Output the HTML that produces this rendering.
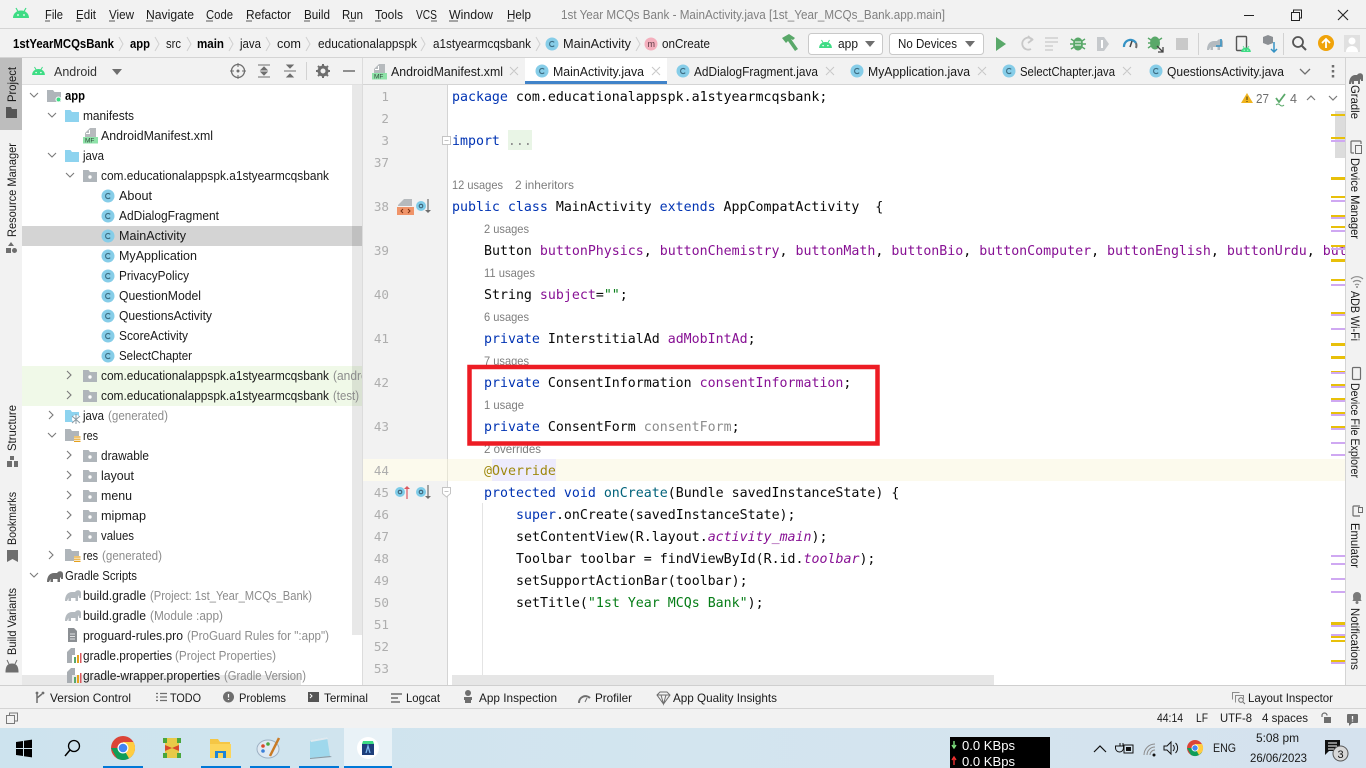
<!DOCTYPE html>
<html><head><meta charset="utf-8"><title>MainActivity.java</title>
<style>
html,body{margin:0;padding:0;width:1366px;height:768px;overflow:hidden;background:#f2f2f2}
svg{display:block}
text{white-space:pre}
.u{font:13px "Liberation Sans",sans-serif;fill:#1a1a1a}
.b{font-weight:bold;fill:#000}
.g{fill:#8c8c8c}
.c{font:13.28px "DejaVu Sans Mono","Liberation Mono",monospace;fill:#080808}
.k{fill:#0033b3}.f{fill:#871094}.s{fill:#067d17}.a{fill:#9e880d}.i{font-style:italic}.x{fill:#8c8c8c}
.n{font:12.6px "DejaVu Sans Mono","Liberation Mono",monospace;fill:#aeaeae}
.h{font:12px "Liberation Sans",sans-serif;fill:#7d7d7d}
.sm{font:12px "Liberation Sans",sans-serif;fill:#1a1a1a}
</style></head><body>
<svg width="1366" height="768" viewBox="0 0 1366 768" xmlns="http://www.w3.org/2000/svg">
<defs>
<symbol id="C" viewBox="0 0 14 14" overflow="visible"><circle cx="7" cy="7" r="6.5" fill="#86cde8"/><path d="M9.200 5.400A2.600 2.600 0 1 0 9.200 8.600" fill="none" stroke="#3e6e84" stroke-width="1.100"/></symbol>
<symbol id="fg" viewBox="0 0 14 12" overflow="visible"><path d="M0 0h5.500l1.500 2h7v10H0z" fill="#afb5ba"/><circle cx="7" cy="7" r="1.700" fill="#fff"/></symbol>
<symbol id="fb" viewBox="0 0 14 12" overflow="visible"><path d="M0 0h5.500l1.500 2h7v10H0z" fill="#8dd3ef"/></symbol>
<symbol id="fr" viewBox="0 0 16 14" overflow="visible"><path d="M0 0h5.500l1.500 2h7v10H0z" fill="#afb5ba"/><path d="M9 7h7v7H9z" fill="#fff"/><path d="M9 8h6.500M9 10.200h6.500M9 12.400h6.500" stroke="#e5a11e" stroke-width="1.200"/></symbol>
<symbol id="ele" viewBox="0 0 16 12" overflow="visible"><path d="M0 12C0 6 3 3 7 3h3c2-3 6-2 6 1v5h-2V6l-1 2v4h-2.500V9H6v3H3.500V9L2 12z" fill="#b4babf"/></symbol>
<symbol id="prop" viewBox="0 0 14 15" overflow="visible"><path d="M0 4l4-4h4v7H5v8H0z" fill="#a8adb2"/><path d="M7 9h2v6H7z" fill="#59a869"/><path d="M10 7h2v8h-2z" fill="#e5a11e"/><path d="M13 5h1.500v10H13z" fill="#db5860"/></symbol>
<symbol id="mf" viewBox="0 0 16 16" overflow="visible"><path d="M7 0h6v9H2V5z" fill="#b6babd"/><path d="M6.500 2v3.500H3" stroke="#fff" fill="none"/><rect y="9" width="15" height="6.500" fill="#8ee2a8"/><text x="2" y="14.500" font-family="Liberation Sans" font-size="6.500" fill="#2f4a3a">MF</text></symbol>
<symbol id="andr" viewBox="0 0 16 10" overflow="visible"><path d="M0 10C0 5.500 3.500 2.500 8 2.500S16 5.500 16 10z" fill="#3ddc84"/><path d="M3 0l2 3.500M13 0l-2 3.500" stroke="#3ddc84" stroke-width="1.200"/><circle cx="5" cy="7" r=".9" fill="#fff"/><circle cx="11" cy="7" r=".9" fill="#fff"/></symbol>
<clipPath id="tree"><rect x="22" y="85" width="340" height="600"/></clipPath>
<clipPath id="ed"><rect x="448" y="85" width="897" height="590"/></clipPath>
<clipPath id="neti"><rect x="950" y="737" width="100" height="31"/></clipPath>
<linearGradient id="tb" x1="0" x2="1" y1="0" y2="0"><stop offset="0" stop-color="#cde3ee"/><stop offset=".5" stop-color="#d3e5ef"/><stop offset="1" stop-color="#d5e2ee"/></linearGradient>
</defs>

<rect width="1366" height="768" fill="#f2f2f2"/>
<!-- title bar -->
<use href="#andr" x="13" y="8" width="16" height="10"/>
<text class="u" x="45" y="19" textLength="18" lengthAdjust="spacingAndGlyphs">File</text>
<text class="u" x="76" y="19" textLength="20" lengthAdjust="spacingAndGlyphs">Edit</text>
<text class="u" x="109" y="19" textLength="25" lengthAdjust="spacingAndGlyphs">View</text>
<text class="u" x="146" y="19" textLength="48" lengthAdjust="spacingAndGlyphs">Navigate</text>
<text class="u" x="206" y="19" textLength="27" lengthAdjust="spacingAndGlyphs">Code</text>
<text class="u" x="246" y="19" textLength="45" lengthAdjust="spacingAndGlyphs">Refactor</text>
<text class="u" x="304" y="19" textLength="26" lengthAdjust="spacingAndGlyphs">Build</text>
<text class="u" x="342" y="19" textLength="21" lengthAdjust="spacingAndGlyphs">Run</text>
<text class="u" x="375" y="19" textLength="28" lengthAdjust="spacingAndGlyphs">Tools</text>
<text class="u" x="416" y="19" textLength="21" lengthAdjust="spacingAndGlyphs">VCS</text>
<text class="u" x="449" y="19" textLength="44" lengthAdjust="spacingAndGlyphs">Window</text>
<text class="u" x="507" y="19" textLength="24" lengthAdjust="spacingAndGlyphs">Help</text>
<path d="M45 21h5M76 21h5M109 21h6M146 21h7M206 21h7M246 21h6M304 21h6M349 21h6M375 21h6M431 21h6M449 21h9M507 21h7" stroke="#222" stroke-width=".8"/>
<text class="u" style="fill:#808080" x="561" y="19" textLength="384" lengthAdjust="spacingAndGlyphs">1st Year MCQs Bank - MainActivity.java [1st_Year_MCQs_Bank.app.main]</text>
<path d="M1244 15.500h10" stroke="#222"/>
<path d="M1291.500 12.500h8v8h-8zM1293.500 12.500v-2.500h8v8h-2" fill="none" stroke="#222"/>
<path d="M1338 10l10 10M1348 10l-10 10" stroke="#222" stroke-width="1.100"/>
<rect y="28" width="1366" height="1" fill="#d4d4d4"/>

<!-- breadcrumbs -->
<text class="u b" x="13" y="48" textLength="101" lengthAdjust="spacingAndGlyphs">1stYearMCQsBank</text>
<text class="u b" x="130" y="48" textLength="20" lengthAdjust="spacingAndGlyphs">app</text>
<text class="u" x="166" y="48" textLength="15" lengthAdjust="spacingAndGlyphs">src</text>
<text class="u b" x="197" y="48" textLength="27" lengthAdjust="spacingAndGlyphs">main</text>
<text class="u" x="240" y="48" textLength="21" lengthAdjust="spacingAndGlyphs">java</text>
<text class="u" x="277" y="48" textLength="24" lengthAdjust="spacingAndGlyphs">com</text>
<text class="u" x="318" y="48" textLength="99" lengthAdjust="spacingAndGlyphs">educationalappspk</text>
<text class="u" x="433" y="48" textLength="98" lengthAdjust="spacingAndGlyphs">a1styearmcqsbank</text>
<path d="M119 37l4 7-4 7M155 37l4 7-4 7M187 37l4 7-4 7M229 37l4 7-4 7M266 37l4 7-4 7M306 37l4 7-4 7M421 37l4 7-4 7M536 37l4 7-4 7M636 37l4 7-4 7" fill="none" stroke="#d0d0d0"/>
<use href="#C" x="545" y="37" width="14" height="14"/>
<text class="u" x="563" y="48" textLength="68" lengthAdjust="spacingAndGlyphs">MainActivity</text>
<circle cx="651" cy="44" r="6.500" fill="#f4afbd"/><text x="647.500" y="47" font-family="Liberation Sans" font-size="9" fill="#5c3a44">m</text>
<text class="u" x="662" y="48" textLength="48" lengthAdjust="spacingAndGlyphs">onCreate</text>
<!-- toolbar -->
<path d="M782 38l7-4 6 4-2 2-2-1 7 10-3 2-7-10-2 2z" fill="#59a869"/>
<rect x="808.500" y="33.500" width="74" height="21" rx="3" fill="#fff" stroke="#c9c9c9"/>
<use href="#andr" x="819" y="40" width="13" height="8"/>
<text class="u" x="838" y="48" textLength="20" lengthAdjust="spacingAndGlyphs">app</text>
<path d="M865 41h10l-5 6z" fill="#6e6e6e"/>
<rect x="889.500" y="33.500" width="94" height="21" rx="3" fill="#fff" stroke="#c9c9c9"/>
<text class="u" x="898" y="48" textLength="59" lengthAdjust="spacingAndGlyphs">No Devices</text>
<path d="M965 41h10l-5 6z" fill="#6e6e6e"/>
<path d="M996 37v14l10-7z" fill="#59a869"/>
<path d="M1033 40a6 6 0 1 0-2 9M1028 36l4 4-4 3" fill="none" stroke="#c8c8c8" stroke-width="1.800"/>
<path d="M1045 38h13M1045 42h13M1045 46h8M1045 50h8" stroke="#c8c8c8" stroke-width="1.300"/>
<g fill="#59a869"><ellipse cx="1078" cy="44" rx="5" ry="6.500"/><path d="M1071 39l3 2M1085 39l-3 2M1070 44h3M1086 44h-3M1071 49l3-2M1085 49l-3-2" stroke="#59a869" stroke-width="1.400"/><path d="M1075 42h6M1075 45h6" stroke="#fff"/></g>
<path d="M1097 37h7l5 7-5 7h-7z" fill="#c6c9cc"/><path d="M1102 40v8" stroke="#fff" stroke-width="2"/>
<path d="M1124 47a6.500 6.500 0 0 1 12-4" fill="none" stroke="#3592c4" stroke-width="2.200"/><path d="M1136 48a7 7 0 0 0 0-5" fill="none" stroke="#6e6e6e" stroke-width="2"/><path d="M1130 47l2-6" stroke="#444" stroke-width="1.500"/>
<ellipse cx="1155" cy="43" rx="5" ry="6.500" fill="#59a869"/><path d="M1148 38l3 2M1148 43h3M1148 48l3-2M1162 38l-3 2" stroke="#59a869" stroke-width="1.400"/><path d="M1157 46l6 6M1163 47v5h-5" fill="none" stroke="#444" stroke-width="1.300"/>
<rect x="1176" y="38" width="12" height="12" fill="#c9c9c9"/>
<rect x="1198" y="33" width="1" height="22" fill="#d2d2d2"/>
<use href="#ele" x="1207" y="38" width="16" height="12"/><path d="M1221 39v7h-5" stroke="#3592c4" fill="none" stroke-width="1.500"/>
<rect x="1236.500" y="36.500" width="10" height="14" rx="1" fill="none" stroke="#555" stroke-width="1.400"/><use href="#andr" x="1241" y="46" width="10" height="6"/>
<path d="M1263 37l5-2 5 2v6l-5 2-5-2z" fill="#8b8f93"/><path d="M1274 42v10M1271 49l3 3 3-3" fill="none" stroke="#3592c4" stroke-width="1.500"/>
<rect x="1283" y="33" width="1" height="22" fill="#d2d2d2"/>
<circle cx="1298" cy="42" r="5" fill="none" stroke="#555" stroke-width="1.800"/><path d="M1302 46l4 4" stroke="#555" stroke-width="2"/>
<circle cx="1326" cy="43" r="8" fill="#f0a30a"/><path d="M1326 48v-9M1322 43l4-4 4 4" fill="none" stroke="#fff" stroke-width="1.800"/>
<rect x="1344" y="35" width="16" height="17" fill="#e0e0e0"/><circle cx="1352" cy="41" r="3.500" fill="#fff"/><path d="M1346 52c0-8 12-8 12 0z" fill="#fff"/>
<rect y="57" width="1366" height="1" fill="#d4d4d4"/>

<!-- left strip -->
<rect x="0" y="58" width="22" height="72" fill="#bdbdbd"/>
<text class="sm" transform="translate(16 102) rotate(-90)" textLength="35" lengthAdjust="spacingAndGlyphs">Project</text>
<text class="sm" transform="translate(16 237) rotate(-90)" textLength="94" lengthAdjust="spacingAndGlyphs">Resource Manager</text>
<text class="sm" transform="translate(16 451) rotate(-90)" textLength="46" lengthAdjust="spacingAndGlyphs">Structure</text>
<text class="sm" transform="translate(16 545) rotate(-90)" textLength="53" lengthAdjust="spacingAndGlyphs">Bookmarks</text>
<text class="sm" transform="translate(16 655) rotate(-90)" textLength="67" lengthAdjust="spacingAndGlyphs">Build Variants</text>
<path d="M6 107h5l1 2h5v9H6z" fill="#555"/>
<path d="M11 242l3 4H8zM6 248h5v5H6z" fill="#6e6e6e"/><circle cx="14.500" cy="250.500" r="2.500" fill="#6e6e6e"/>
<path d="M7 461h5v6H7zM14 461h4v6h-4zM10 456h4v4h-4z" fill="#6e6e6e"/>
<path d="M7 550h11v12l-5.500-3-5.500 3z" fill="#6e6e6e"/>
<path d="M6 672c0-6 2-8 6-8s6 2 6 8zM7 660l2 4M17 660l-2 4" fill="#6e6e6e" stroke="#6e6e6e"/>

<!-- project panel header -->
<use href="#andr" x="32" y="67" width="13" height="8"/>
<text class="u" style="fill:#333" x="54" y="76" textLength="43" lengthAdjust="spacingAndGlyphs">Android</text>
<path d="M112 69h10l-5 6z" fill="#6e6e6e"/>
<circle cx="238" cy="71" r="6.500" fill="none" stroke="#6e6e6e" stroke-width="1.300"/><circle cx="238" cy="71" r="1.500" fill="#6e6e6e"/><path d="M238 63v4M238 75v4M230 71h4M242 71h4" stroke="#6e6e6e"/>
<path d="M258 65h12M258 77h12M261 70l3-3 3 3zM261 72l3 3 3-3z" stroke="#6e6e6e" fill="#6e6e6e" stroke-width="1"/>
<path d="M284 71h12M287 65l3 3 3-3zM287 77l3-3 3 3z" stroke="#6e6e6e" fill="#6e6e6e"/>
<rect x="306" y="62" width="1" height="18" fill="#d2d2d2"/>
<circle cx="323" cy="71" r="4" fill="none" stroke="#6e6e6e" stroke-width="3"/><path d="M323 64v2M323 76v2M316 71h2M328 71h2M318 66l1.500 1.500M328 66l-1.500 1.500M318 76l1.500-1.500M328 76l-1.500-1.500" stroke="#6e6e6e" stroke-width="2"/>
<path d="M343 71h12" stroke="#6e6e6e" stroke-width="1.500"/>
<rect x="22" y="84" width="341" height="1" fill="#e0e0e0"/>
<rect x="22" y="85" width="340" height="600" fill="#fff"/>
<rect x="362" y="58" width="1" height="628" fill="#dcdcdc"/>

<!-- tree -->
<g clip-path="url(#tree)">
<rect x="22" y="226" width="340" height="20" fill="#d4d4d4"/>
<rect x="22" y="366" width="340" height="40" fill="#f0f9e8"/>
<rect x="352" y="85" width="10" height="550" fill="#000" opacity=".09"/>
<g fill="none" stroke="#7a7a7a" stroke-width="1.100">
<path d="M30 93l4 4 4-4M48 113l4 4 4-4M48 153l4 4 4-4M66 173l4 4 4-4M48 433l4 4 4-4M30 573l4 4 4-4"/>
<path d="M67 371l4 4-4 4M67 391l4 4-4 4M49 411l4 4-4 4M67 451l4 4-4 4M67 471l4 4-4 4M67 491l4 4-4 4M67 511l4 4-4 4M67 531l4 4-4 4M49 551l4 4-4 4"/>
</g>
<path d="M47 90h6l1.500 2H61v10H47z" fill="#afb5ba"/><circle cx="58.500" cy="99.500" r="2.500" fill="#3ddc84" stroke="#fff"/>
<use href="#fb" x="65" y="110" width="14" height="12"/>
<use href="#mf" x="83" y="128" width="16" height="16"/>
<use href="#fb" x="65" y="150" width="14" height="12"/>
<use href="#fg" x="83" y="170" width="14" height="12"/>
<use href="#C" x="101" y="189" width="14" height="14"/>
<use href="#C" x="101" y="209" width="14" height="14"/>
<use href="#C" x="101" y="229" width="14" height="14"/>
<use href="#C" x="101" y="249" width="14" height="14"/>
<use href="#C" x="101" y="269" width="14" height="14"/>
<use href="#C" x="101" y="289" width="14" height="14"/>
<use href="#C" x="101" y="309" width="14" height="14"/>
<use href="#C" x="101" y="329" width="14" height="14"/>
<use href="#C" x="101" y="349" width="14" height="14"/>
<use href="#fg" x="83" y="370" width="14" height="12"/>
<use href="#fg" x="83" y="390" width="14" height="12"/>
<use href="#fb" x="65" y="410" width="14" height="12"/><circle cx="76" cy="419" r="4" fill="#fff"/><path d="M72 416l8 7M80 416l-8 7M76 414v10" stroke="#8a9aa3"/>
<use href="#fr" x="65" y="429" width="16" height="14"/>
<use href="#fg" x="83" y="450" width="14" height="12"/>
<use href="#fg" x="83" y="470" width="14" height="12"/>
<use href="#fg" x="83" y="490" width="14" height="12"/>
<use href="#fg" x="83" y="510" width="14" height="12"/>
<use href="#fg" x="83" y="530" width="14" height="12"/>
<use href="#fr" x="65" y="549" width="16" height="14"/>
<path d="M47 582C47 576 50 573 54 573h3c2-3 6-2 6 1v5h-2v-2l-1 1v4h-2.500v-3H53v3h-2.500v-3L49 582z" fill="#6e6e6e"/>
<rect x="22" y="675" width="279" height="10" fill="#000" opacity=".09"/>
<use href="#ele" x="65" y="589" width="16" height="12"/>
<use href="#ele" x="65" y="609" width="16" height="12"/>
<path d="M68 628h6l3 3v11h-9z" fill="#8b8f93"/><path d="M70 634h5M70 636.500h5M70 639h5" stroke="#fff" stroke-width=".8"/>
<use href="#prop" x="67" y="648" width="14" height="15"/>
<use href="#prop" x="67" y="668" width="14" height="15"/>
<text class="u b" x="65" y="100" textLength="20" lengthAdjust="spacingAndGlyphs">app</text>
<text class="u" x="83" y="120" textLength="51" lengthAdjust="spacingAndGlyphs">manifests</text>
<text class="u" x="101" y="140" textLength="112" lengthAdjust="spacingAndGlyphs">AndroidManifest.xml</text>
<text class="u" x="83" y="160" textLength="21" lengthAdjust="spacingAndGlyphs">java</text>
<text class="u" x="101" y="180" textLength="228" lengthAdjust="spacingAndGlyphs">com.educationalappspk.a1styearmcqsbank</text>
<text class="u" x="119" y="200" textLength="33" lengthAdjust="spacingAndGlyphs">About</text>
<text class="u" x="119" y="220" textLength="100" lengthAdjust="spacingAndGlyphs">AdDialogFragment</text>
<text class="u" x="119" y="240" textLength="67" lengthAdjust="spacingAndGlyphs">MainActivity</text>
<text class="u" x="119" y="260" textLength="78" lengthAdjust="spacingAndGlyphs">MyApplication</text>
<text class="u" x="119" y="280" textLength="70" lengthAdjust="spacingAndGlyphs">PrivacyPolicy</text>
<text class="u" x="119" y="300" textLength="82" lengthAdjust="spacingAndGlyphs">QuestionModel</text>
<text class="u" x="119" y="320" textLength="93" lengthAdjust="spacingAndGlyphs">QuestionsActivity</text>
<text class="u" x="119" y="340" textLength="69" lengthAdjust="spacingAndGlyphs">ScoreActivity</text>
<text class="u" x="119" y="360" textLength="73" lengthAdjust="spacingAndGlyphs">SelectChapter</text>
<text class="u" x="101" y="380" textLength="228" lengthAdjust="spacingAndGlyphs">com.educationalappspk.a1styearmcqsbank</text>
<text class="u g" x="333" y="380" textLength="70" lengthAdjust="spacingAndGlyphs">(androidTest)</text>
<text class="u" x="101" y="400" textLength="228" lengthAdjust="spacingAndGlyphs">com.educationalappspk.a1styearmcqsbank</text>
<text class="u g" x="333" y="400" textLength="26" lengthAdjust="spacingAndGlyphs">(test)</text>
<text class="u" x="83" y="420" textLength="21" lengthAdjust="spacingAndGlyphs">java</text>
<text class="u g" x="108" y="420" textLength="60" lengthAdjust="spacingAndGlyphs">(generated)</text>
<text class="u" x="83" y="440" textLength="15" lengthAdjust="spacingAndGlyphs">res</text>
<text class="u" x="101" y="460" textLength="48" lengthAdjust="spacingAndGlyphs">drawable</text>
<text class="u" x="101" y="480" textLength="33" lengthAdjust="spacingAndGlyphs">layout</text>
<text class="u" x="101" y="500" textLength="31" lengthAdjust="spacingAndGlyphs">menu</text>
<text class="u" x="101" y="520" textLength="45" lengthAdjust="spacingAndGlyphs">mipmap</text>
<text class="u" x="101" y="540" textLength="33" lengthAdjust="spacingAndGlyphs">values</text>
<text class="u" x="83" y="560" textLength="15" lengthAdjust="spacingAndGlyphs">res</text>
<text class="u g" x="102" y="560" textLength="60" lengthAdjust="spacingAndGlyphs">(generated)</text>
<text class="u" x="65" y="580" textLength="72" lengthAdjust="spacingAndGlyphs">Gradle Scripts</text>
<text class="u" x="83" y="600" textLength="63" lengthAdjust="spacingAndGlyphs">build.gradle</text>
<text class="u g" x="150" y="600" textLength="162" lengthAdjust="spacingAndGlyphs">(Project: 1st_Year_MCQs_Bank)</text>
<text class="u" x="83" y="620" textLength="63" lengthAdjust="spacingAndGlyphs">build.gradle</text>
<text class="u g" x="150" y="620" textLength="73" lengthAdjust="spacingAndGlyphs">(Module :app)</text>
<text class="u" x="83" y="640" textLength="100" lengthAdjust="spacingAndGlyphs">proguard-rules.pro</text>
<text class="u g" x="187" y="640" textLength="142" lengthAdjust="spacingAndGlyphs">(ProGuard Rules for ":app")</text>
<text class="u" x="83" y="660" textLength="89" lengthAdjust="spacingAndGlyphs">gradle.properties</text>
<text class="u g" x="175" y="660" textLength="101" lengthAdjust="spacingAndGlyphs">(Project Properties)</text>
<text class="u" x="83" y="680" textLength="137" lengthAdjust="spacingAndGlyphs">gradle-wrapper.properties</text>
<text class="u g" x="224" y="680" textLength="82" lengthAdjust="spacingAndGlyphs">(Gradle Version)</text>
</g>

<!-- tabs -->
<rect x="363" y="58" width="982" height="26" fill="#f2f2f2"/>
<rect x="525" y="58" width="142" height="26" fill="#fff"/>
<rect x="525" y="81" width="142" height="3" fill="#4083c9"/>
<rect x="363" y="84" width="982" height="1" fill="#d4d4d4"/>
<use href="#mf" x="372" y="64" width="16" height="16"/>
<text class="u" x="391" y="76" textLength="112" lengthAdjust="spacingAndGlyphs">AndroidManifest.xml</text>
<use href="#C" x="535" y="64" width="14" height="14"/>
<text class="u" x="553" y="76" textLength="91" lengthAdjust="spacingAndGlyphs">MainActivity.java</text>
<use href="#C" x="676" y="64" width="14" height="14"/>
<text class="u" x="694" y="76" textLength="124" lengthAdjust="spacingAndGlyphs">AdDialogFragment.java</text>
<use href="#C" x="850" y="64" width="14" height="14"/>
<text class="u" x="868" y="76" textLength="102" lengthAdjust="spacingAndGlyphs">MyApplication.java</text>
<use href="#C" x="1002" y="64" width="14" height="14"/>
<text class="u" x="1020" y="76" textLength="95" lengthAdjust="spacingAndGlyphs">SelectChapter.java</text>
<use href="#C" x="1149" y="64" width="14" height="14"/>
<text class="u" x="1167" y="76" textLength="117" lengthAdjust="spacingAndGlyphs">QuestionsActivity.java</text>
<path d="M510 67l8 8M518 67l-8 8M652 67l8 8M660 67l-8 8M826 67l8 8M834 67l-8 8M978 67l8 8M986 67l-8 8M1123 67l8 8M1131 67l-8 8" stroke="#c8c8c8"/>
<path d="M1300 69l5 5 5-5" fill="none" stroke="#6e6e6e" stroke-width="1.300"/>
<path d="M1333 65v2.500M1333 70v2.500M1333 75v2.500" stroke="#6e6e6e" stroke-width="2.500"/>

<!-- editor -->
<rect x="363" y="85" width="84" height="601" fill="#f2f2f2"/>
<rect x="447" y="85" width="898" height="601" fill="#fff"/>
<rect x="447" y="85" width="1" height="601" fill="#d4d4d4"/>
<rect x="363" y="459" width="982" height="22" fill="#fcfaed"/>
<rect x="447" y="459" width="1" height="22" fill="#e6e4d6"/>
<rect x="492" y="459" width="64" height="22" fill="#edebfc"/>
<rect x="508" y="130" width="24" height="20" fill="#e9f5e6"/>
<path d="M482.500 503v172" stroke="#e4e4e4"/>
<g text-anchor="end">
<text class="n" x="389" y="101">1</text><text class="n" x="389" y="123">2</text><text class="n" x="389" y="145">3</text><text class="n" x="389" y="167">37</text>
<text class="n" x="389" y="211">38</text><text class="n" x="389" y="255">39</text><text class="n" x="389" y="299">40</text><text class="n" x="389" y="343">41</text>
<text class="n" x="389" y="387">42</text><text class="n" x="389" y="431">43</text><text class="n" x="389" y="475">44</text><text class="n" x="389" y="497">45</text>
<text class="n" x="389" y="519">46</text><text class="n" x="389" y="541">47</text><text class="n" x="389" y="563">48</text><text class="n" x="389" y="585">49</text>
<text class="n" x="389" y="607">50</text><text class="n" x="389" y="629">51</text><text class="n" x="389" y="651">52</text><text class="n" x="389" y="673">53</text>
</g>
<path d="M398 205l6-6h8v7h-14z" fill="#b6babd"/><rect x="397" y="207" width="17" height="8" fill="#f09469"/><path d="M403 209l-2 2 2 2M408 209l2 2-2 2" fill="none" stroke="#7a2f10"/>
<circle cx="421" cy="206" r="5" fill="#7fcce8"/><circle cx="421" cy="206" r="1.800" fill="none" stroke="#39596b"/><path d="M428 199v12" stroke="#6e6e6e" stroke-width="1.200"/><path d="M425 210h6l-3 3z" fill="#6e6e6e"/>
<circle cx="400" cy="492" r="5" fill="#7fcce8"/><circle cx="400" cy="492" r="1.800" fill="none" stroke="#39596b"/><path d="M407 488v11" stroke="#db5860" stroke-width="1.200"/><path d="M404 489h6l-3-3z" fill="#db5860"/>
<circle cx="421" cy="492" r="5" fill="#7fcce8"/><circle cx="421" cy="492" r="1.800" fill="none" stroke="#39596b"/><path d="M428 485v12" stroke="#6e6e6e" stroke-width="1.200"/><path d="M425 496h6l-3 3z" fill="#6e6e6e"/>
<path d="M442.500 136.500h8v8h-8zM444.500 140.500h4" fill="#fff" stroke="#c4c4c4"/>
<path d="M442.500 487.500h8v6l-4 3.500-4-3.500z" fill="#fff" stroke="#c4c4c4"/><path d="M444.500 491.500h4" stroke="#c4c4c4"/>

<g clip-path="url(#ed)">
<text class="c" x="452" y="101"><tspan class="k">package</tspan> com.educationalappspk.a1styearmcqsbank;</text>
<text class="c" x="452" y="145"><tspan class="k">import</tspan> <tspan class="x">...</tspan></text>
<text class="h" x="452" y="189" textLength="51" lengthAdjust="spacingAndGlyphs">12 usages</text>
<text class="h" x="515" y="189" textLength="59" lengthAdjust="spacingAndGlyphs">2 inheritors</text>
<text class="c" x="452" y="211"><tspan class="k">public class</tspan> MainActivity <tspan class="k">extends</tspan> AppCompatActivity  {</text>
<text class="h" x="484" y="233" textLength="45" lengthAdjust="spacingAndGlyphs">2 usages</text>
<text class="c" x="484" y="255">Button <tspan class="f">buttonPhysics</tspan>, <tspan class="f">buttonChemistry</tspan>, <tspan class="f">buttonMath</tspan>, <tspan class="f">buttonBio</tspan>, <tspan class="f">buttonComputer</tspan>, <tspan class="f">buttonEnglish</tspan>, <tspan class="f">buttonUrdu</tspan>, <tspan class="f">buttonIslamiat</tspan>;</text>
<text class="h" x="484" y="277" textLength="51" lengthAdjust="spacingAndGlyphs">11 usages</text>
<text class="c" x="484" y="299">String <tspan class="f">subject</tspan>=<tspan class="s">""</tspan>;</text>
<text class="h" x="484" y="321" textLength="45" lengthAdjust="spacingAndGlyphs">6 usages</text>
<text class="c" x="484" y="343"><tspan class="k">private</tspan> InterstitialAd <tspan class="f">adMobIntAd</tspan>;</text>
<text class="h" x="484" y="365" textLength="45" lengthAdjust="spacingAndGlyphs">7 usages</text>
<text class="c" x="484" y="387"><tspan class="k">private</tspan> ConsentInformation <tspan class="f">consentInformation</tspan>;</text>
<text class="h" x="484" y="409" textLength="40" lengthAdjust="spacingAndGlyphs">1 usage</text>
<text class="c" x="484" y="431"><tspan class="k">private</tspan> ConsentForm <tspan class="x">consentForm</tspan>;</text>
<text class="h" x="484" y="453" textLength="57" lengthAdjust="spacingAndGlyphs">2 overrides</text>
<text class="c a" x="484" y="475">@Override</text>
<text class="c" x="484" y="497"><tspan class="k">protected void</tspan> <tspan style="fill:#00627a">onCreate</tspan>(Bundle savedInstanceState) {</text>
<text class="c" x="516" y="519"><tspan class="k">super</tspan>.onCreate(savedInstanceState);</text>
<text class="c" x="516" y="541">setContentView(R.layout.<tspan class="f i">activity_main</tspan>);</text>
<text class="c" x="516" y="563">Toolbar toolbar = findViewById(R.id.<tspan class="f i">toolbar</tspan>);</text>
<text class="c" x="516" y="585">setSupportActionBar(toolbar);</text>
<text class="c" x="516" y="607">setTitle(<tspan class="s">"1st Year MCQs Bank"</tspan>);</text>
</g>
<rect x="452" y="675" width="542" height="10" fill="#e6e6e6"/>
<!-- inspection widget -->
<path d="M1241 103l6-10 6 10z" fill="#f0b41e"/><path d="M1247 96.500v3.500M1247 101v1" stroke="#4a3a08"/>
<text class="u" style="fill:#6e6e6e" x="1256" y="103" textLength="13" lengthAdjust="spacingAndGlyphs">27</text>
<path d="M1276 98l3 4 6-8" fill="none" stroke="#59a869" stroke-width="1.800"/><path d="M1276 105q2-2 4 0t4 0" fill="none" stroke="#59a869"/>
<text class="u" style="fill:#6e6e6e" x="1290" y="103" textLength="7" lengthAdjust="spacingAndGlyphs">4</text>
<path d="M1307 100l4-4 4 4M1329 96l4 4 4-4" fill="none" stroke="#7a7a7a" stroke-width="1.200"/>
<!-- scrollbar + stripes -->
<rect x="1335" y="111" width="10" height="47" fill="#dcdcdc"/>
<g fill="#e8c00a">
<rect x="1331" y="114" width="14" height="2"/><rect x="1331" y="137" width="14" height="2"/><rect x="1331" y="177" width="14" height="3"/><rect x="1331" y="196" width="14" height="2"/><rect x="1331" y="215" width="14" height="3"/><rect x="1331" y="226" width="14" height="2"/><rect x="1331" y="245" width="14" height="2"/><rect x="1331" y="259" width="14" height="3"/><rect x="1331" y="279" width="14" height="2"/><rect x="1331" y="312" width="14" height="3"/><rect x="1331" y="343" width="14" height="3"/><rect x="1331" y="356" width="14" height="3"/><rect x="1331" y="371" width="14" height="2"/><rect x="1331" y="384" width="14" height="3"/><rect x="1331" y="398" width="14" height="2"/><rect x="1331" y="412" width="14" height="3"/><rect x="1331" y="426" width="14" height="2"/><rect x="1331" y="622" width="14" height="3"/><rect x="1331" y="636" width="14" height="2"/><rect x="1331" y="640" width="14" height="2"/><rect x="1331" y="660" width="14" height="2"/>
</g>
<g fill="#cfa8f2">
<rect x="1331" y="140" width="14" height="2"/><rect x="1331" y="200" width="14" height="2"/><rect x="1331" y="217" width="14" height="2"/><rect x="1331" y="230" width="14" height="2"/><rect x="1331" y="248" width="14" height="2"/><rect x="1331" y="284" width="14" height="2"/><rect x="1331" y="314" width="14" height="2"/><rect x="1331" y="328" width="14" height="2"/><rect x="1331" y="372" width="14" height="2"/><rect x="1331" y="386" width="14" height="2"/><rect x="1331" y="400" width="14" height="2"/><rect x="1331" y="414" width="14" height="2"/><rect x="1331" y="428" width="14" height="2"/><rect x="1331" y="442" width="14" height="2"/><rect x="1331" y="454" width="14" height="2"/><rect x="1331" y="555" width="14" height="2"/><rect x="1331" y="563" width="14" height="2"/><rect x="1331" y="578" width="14" height="2"/><rect x="1331" y="591" width="14" height="2"/><rect x="1331" y="625" width="14" height="2"/><rect x="1331" y="634" width="14" height="2"/><rect x="1331" y="662" width="14" height="2"/>
</g>

<!-- red annotation -->
<rect x="469.500" y="367" width="408" height="76.500" fill="none" stroke="#ed1c24" stroke-width="4.500"/>

<!-- right strip -->
<rect x="1345" y="58" width="21" height="628" fill="#f2f2f2"/>
<rect x="1345" y="58" width="1" height="628" fill="#d4d4d4"/>
<text class="sm" transform="translate(1351 85) rotate(90)" textLength="34" lengthAdjust="spacingAndGlyphs">Gradle</text>
<text class="sm" transform="translate(1351 158) rotate(90)" textLength="81" lengthAdjust="spacingAndGlyphs">Device Manager</text>
<text class="sm" transform="translate(1351 291) rotate(90)" textLength="50" lengthAdjust="spacingAndGlyphs">ADB Wi-Fi</text>
<text class="sm" transform="translate(1351 383) rotate(90)" textLength="95" lengthAdjust="spacingAndGlyphs">Device File Explorer</text>
<text class="sm" transform="translate(1351 523) rotate(90)" textLength="45" lengthAdjust="spacingAndGlyphs">Emulator</text>
<text class="sm" transform="translate(1351 608) rotate(90)" textLength="62" lengthAdjust="spacingAndGlyphs">Notifications</text>
<path d="M1349 84C1349 78 1352 75 1355 75h2c2-3 6-2 6 1v5h-2v-2l-1 1v4h-2v-3h-4v3h-2v-3l-1 3z" fill="#6e6e6e"/>
<path d="M1354 153h-2a1 1 0 0 1-1-1v-10a1 1 0 0 1 1-1h8a1 1 0 0 1 1 1v2" fill="none" stroke="#6e6e6e" stroke-width="1.200"/><rect x="1355.500" y="145.500" width="6" height="8" fill="#f2f2f2" stroke="#6e6e6e"/>
<path d="M1351 279a9 9 0 0 1 12 0M1353 282a6 6 0 0 1 8 0M1355 285a3 3 0 0 1 4 0" fill="none" stroke="#8c8c8c" stroke-width="1.200"/><circle cx="1357" cy="287" r="1" fill="#8c8c8c"/>
<rect x="1352.500" y="367.500" width="8" height="12" rx="1" fill="none" stroke="#6e6e6e" stroke-width="1.200"/>
<path d="M1360 516h-6a1 1 0 0 1-1-1v-8a1 1 0 0 1 1-1h6" fill="none" stroke="#6e6e6e" stroke-width="1.200"/><rect x="1358.500" y="507.500" width="4" height="5" fill="none" stroke="#6e6e6e"/>
<path d="M1352 601c2-1 1-3 1-5a4 4 0 0 1 8 0c0 2-1 4 1 5z" fill="#7a7a7a"/><circle cx="1357" cy="602.500" r="1.500" fill="#7a7a7a"/>

<!-- bottom tool bar -->
<rect y="685" width="1366" height="1" fill="#cfcfcf"/>
<rect y="686" width="1366" height="22" fill="#f2f2f2"/>
<rect y="708" width="1366" height="1" fill="#d4d4d4"/>
<path d="M37 693v10M37 698l5-4" fill="none" stroke="#6e6e6e" stroke-width="1.500"/><circle cx="37" cy="693" r="1.400" fill="#6e6e6e"/><circle cx="43" cy="693" r="1.400" fill="#6e6e6e"/>
<path d="M156 693.500h2M156 697h2M156 700.500h2M160 693.500h7M160 697h7M160 700.500h7" stroke="#6e6e6e" stroke-width="1.300"/>
<circle cx="228.500" cy="697" r="5.500" fill="#6e6e6e"/><path d="M228.500 694v3.500M228.500 699v1" stroke="#fff" stroke-width="1.200"/>
<rect x="308" y="692" width="11" height="10" fill="#555"/><path d="M310 694l2 2-2 2" fill="none" stroke="#fff"/>
<path d="M391 694h11M391 698h7M391 702h9" stroke="#6e6e6e" stroke-width="1.400"/>
<circle cx="468" cy="693" r="3" fill="#6e6e6e"/><path d="M464 697h8v3h-1v3h-6v-3h-1z" fill="#6e6e6e"/>
<path d="M579 703a6.500 6.500 0 0 1 11-5" fill="none" stroke="#6e6e6e" stroke-width="2"/><path d="M585 702l2-4" stroke="#6e6e6e"/>
<path d="M657 695l3-3h7l3 3-6.500 9zM657 695h13M661 695l2.500 9 2.500-9" fill="none" stroke="#6e6e6e"/>
<text class="sm" x="50" y="702" textLength="81" lengthAdjust="spacingAndGlyphs">Version Control</text>
<text class="sm" x="170" y="702" textLength="31" lengthAdjust="spacingAndGlyphs">TODO</text>
<text class="sm" x="239" y="702" textLength="47" lengthAdjust="spacingAndGlyphs">Problems</text>
<text class="sm" x="324" y="702" textLength="44" lengthAdjust="spacingAndGlyphs">Terminal</text>
<text class="sm" x="406" y="702" textLength="34" lengthAdjust="spacingAndGlyphs">Logcat</text>
<text class="sm" x="479" y="702" textLength="78" lengthAdjust="spacingAndGlyphs">App Inspection</text>
<text class="sm" x="595" y="702" textLength="37" lengthAdjust="spacingAndGlyphs">Profiler</text>
<text class="sm" x="673" y="702" textLength="104" lengthAdjust="spacingAndGlyphs">App Quality Insights</text>
<path d="M1232.500 699.500v-7h7M1235.500 702.500v-7h8v3" fill="none" stroke="#8c8c8c"/><circle cx="1241" cy="700" r="2.300" fill="none" stroke="#6e6e6e"/><path d="M1243 702l2 2" stroke="#6e6e6e"/>
<text class="sm" x="1248" y="702" textLength="85" lengthAdjust="spacingAndGlyphs">Layout Inspector</text>

<!-- status bar -->
<rect x="6.500" y="715.500" width="8" height="8" fill="none" stroke="#7a7a7a"/><path d="M9.500 715.500v-2.500h8v8h-3" fill="none" stroke="#7a7a7a"/>
<text class="sm" x="1157" y="722" textLength="26" lengthAdjust="spacingAndGlyphs">44:14</text>
<text class="sm" x="1196" y="722" textLength="12" lengthAdjust="spacingAndGlyphs">LF</text>
<text class="sm" x="1220" y="722" textLength="32" lengthAdjust="spacingAndGlyphs">UTF-8</text>
<text class="sm" x="1262" y="722" textLength="46" lengthAdjust="spacingAndGlyphs">4 spaces</text>
<path d="M1322 717v-1.500a2.500 2.500 0 0 1 5 0" fill="none" stroke="#6e6e6e" stroke-width="1.200"/><rect x="1324" y="717" width="7" height="6" fill="#6e6e6e"/>
<rect x="1347" y="714" width="11" height="9" rx="1" fill="#6e6e6e"/><path d="M1349 723v3l3-3z" fill="#6e6e6e"/><path d="M1352.500 716v3.500M1352.500 720.500v1" stroke="#fff" stroke-width="1.300"/>

<!-- taskbar -->
<rect y="728" width="1366" height="40" fill="url(#tb)"/>
<path d="M16 742l7-1v7h-7zM24 740.800l8-1.200v8.400h-8zM16 749h7v7l-7-1zM24 749h8v8.400l-8-1.200z" fill="#000"/>
<circle cx="74" cy="746" r="5.500" fill="none" stroke="#000" stroke-width="1.300"/><path d="M70 750l-5 6" stroke="#000" stroke-width="1.500"/>
<circle cx="123" cy="748" r="12" fill="#db4437"/><path d="M123 748l10.400 6A12 12 0 0 1 117 758.400L111 748z" fill="#0f9d58"/><path d="M123 742h10.400a12 12 0 0 1-4.400 16.400L123 748z" fill="#ffcd40"/><circle cx="123" cy="748" r="5.500" fill="#fff"/><circle cx="123" cy="748" r="4.300" fill="#4285f4"/>
<rect x="165" y="738" width="14" height="20" fill="#e8c948"/><path d="M165 745l14 6v-6l-14 6z" fill="#d9482a"/><path d="M163 738h4v5h-4zM177 738h4v5h-4zM163 753h4v5h-4zM177 753h4v5h-4z" fill="#4aa63c"/>
<path d="M210 739h8l2 3h10v16h-20z" fill="#f5c644"/><rect x="210" y="744" width="21" height="14" fill="#fcd55a"/><rect x="215" y="751" width="11" height="7" fill="#1e84d8"/><rect x="218" y="753" width="5" height="5" fill="#fcd55a"/>
<ellipse cx="268" cy="749" rx="11" ry="9" fill="#dfe9f2" stroke="#9eb2c4"/><circle cx="263" cy="746" r="1.800" fill="#d9482a"/><circle cx="268" cy="744" r="1.800" fill="#4aa63c"/><circle cx="263" cy="751" r="1.800" fill="#3b7fd8"/><path d="M270 756l9-18" stroke="#c97a25" stroke-width="2.500"/>
<path d="M310 740l17-3 3 19-20 2z" fill="#9fd8ec"/><path d="M310 740l17-3 1 2-17 3z" fill="#dfe9ef"/><path d="M310 758l20-2 2 1-22 2z" fill="#8a9aa3"/>
<rect x="344" y="728" width="48" height="40" fill="#e9f2f7"/>
<circle cx="368" cy="748" r="11" fill="#fff"/><path d="M362 744l1-3h10l1 3z" fill="#3ddc84"/><rect x="362" y="744" width="12" height="11" fill="#1f3f7a"/><path d="M366 753l2-7 2 7" fill="none" stroke="#7fb8ee" stroke-width="1.300"/>
<rect x="103" y="766" width="40" height="2" fill="#0078d7"/><rect x="201" y="766" width="40" height="2" fill="#0078d7"/><rect x="250" y="766" width="40" height="2" fill="#0078d7"/><rect x="299" y="766" width="40" height="2" fill="#0078d7"/><rect x="344" y="766" width="48" height="2" fill="#0078d7"/>
<!-- net meter -->
<rect x="950" y="737" width="100" height="31" fill="#000"/>
<g clip-path="url(#neti)">
<path d="M954 741v6M952 745l2 3 2-3" stroke="#7ee07e" fill="none" stroke-width="1.400"/>
<path d="M954 765v-7M952 760l2-3 2 3" stroke="#f03030" fill="none" stroke-width="1.400"/>
<text x="962" y="750" font-family="Liberation Sans" font-size="12.500" fill="#fff" textLength="53" lengthAdjust="spacingAndGlyphs">0.0 KBps</text>
<text x="962" y="766" font-family="Liberation Sans" font-size="12.500" fill="#fff" textLength="53" lengthAdjust="spacingAndGlyphs">0.0 KBps</text>
</g>
<path d="M1094 752l6-6 6 6" fill="none" stroke="#111" stroke-width="1.200"/>
<path d="M1117 746h3v-3M1123 746v-3M1115.500 746h8v2a4 4 0 0 1-8 0z" fill="none" stroke="#111"/><rect x="1124" y="745" width="9" height="8" fill="none" stroke="#111"/><rect x="1126" y="747" width="5" height="4" fill="#111"/>
<path d="M1144 755a11 11 0 0 1 11-11M1147 755a8 8 0 0 1 8-8M1150 755a5 5 0 0 1 5-5" fill="none" stroke="#8c8c8c"/><circle cx="1154" cy="755" r="1.500" fill="#111"/>
<path d="M1164 746h3l4-4v12l-4-4h-3z" fill="none" stroke="#111"/><path d="M1173 745a4 4 0 0 1 0 6M1175.500 743a7 7 0 0 1 0 10" fill="none" stroke="#111"/>
<circle cx="1195" cy="748" r="8" fill="#db4437"/><path d="M1195 748l7 4A8 8 0 0 1 1191 755L1187 748z" fill="#0f9d58"/><path d="M1195 744h7a8 8 0 0 1 0 8l-3 3-4-7z" fill="#ffcd40"/><circle cx="1195" cy="748" r="3.500" fill="#fff"/><circle cx="1195" cy="748" r="2.700" fill="#4285f4"/>
<text x="1213" y="752" font-family="Liberation Sans" font-size="12" fill="#1a1a1a" textLength="23" lengthAdjust="spacingAndGlyphs">ENG</text>
<text x="1256" y="742" font-family="Liberation Sans" font-size="12" fill="#1a1a1a" textLength="43" lengthAdjust="spacingAndGlyphs">5:08 pm</text>
<text x="1250" y="762" font-family="Liberation Sans" font-size="12" fill="#1a1a1a" textLength="57" lengthAdjust="spacingAndGlyphs">26/06/2023</text>
<path d="M1325 740h15v11h-11l-4 4z" fill="#111"/><path d="M1328 743h9M1328 746h9M1328 749h6" stroke="#fff"/>
<circle cx="1340.500" cy="753.500" r="7.500" fill="#d8d8d8" stroke="#555"/><text x="1337.500" y="758" font-family="Liberation Sans" font-size="11" fill="#111">3</text>
</svg>
</body></html>
